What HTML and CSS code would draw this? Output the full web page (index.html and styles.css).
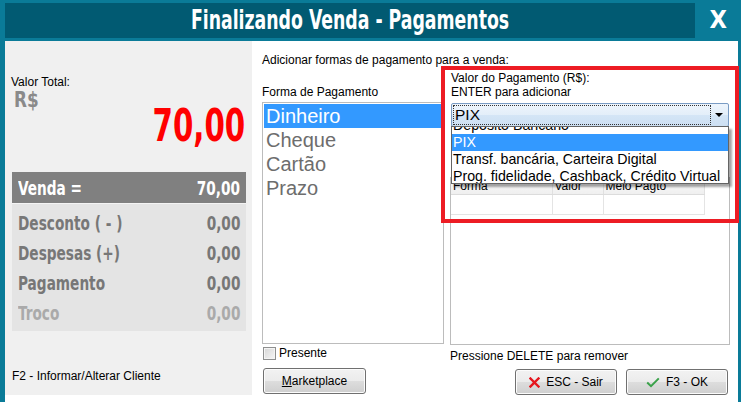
FILE: index.html
```html
<!DOCTYPE html>
<html lang="pt-BR">
<head>
<meta charset="utf-8">
<title>Finalizando Venda - Pagamentos</title>
<link rel="stylesheet" href="styles.css">
</head>
<body>
<div class="window">
  <header class="titlebar">
    <h1 class="title"><span class="nx nx-c">Finalizando Venda - Pagamentos</span></h1>
    <div class="close"><span class="nx nx-c">X</span></div>
  </header>
  <main class="body">
    <aside class="left">
      <div class="lbl-total">Valor Total:</div>
      <div class="currency"><span class="nx">R$</span></div>
      <div class="big-total"><span class="nx nx-r">70,00</span></div>
      <div class="summary">
        <div class="sum-head"><span class="nx">Venda =</span><span class="nx nx-r">70,00</span></div>
        <div class="sum-rows">
          <div class="sum-row"><span class="nx">Desconto ( - )</span><span class="nx nx-r">0,00</span></div>
          <div class="sum-row"><span class="nx">Despesas (+)</span><span class="nx nx-r">0,00</span></div>
          <div class="sum-row"><span class="nx">Pagamento</span><span class="nx nx-r">0,00</span></div>
          <div class="sum-row muted"><span class="nx">Troco</span><span class="nx nx-r">0,00</span></div>
        </div>
      </div>
      <div class="f2">F2 - Informar/Alterar Cliente</div>
    </aside>
    <section class="right">
      <p class="intro">Adicionar formas de pagamento para a venda:</p>
      <div class="cols">
        <div class="col1">
          <div class="label">Forma de Pagamento</div>
          <ul class="listbox">
            <li class="sel">Dinheiro</li>
            <li>Cheque</li>
            <li>Cartão</li>
            <li>Prazo</li>
          </ul>
          <label class="check"><span class="box"></span>Presente</label>
          <div class="btnrow">
            <button class="btn btn-mk"><u>M</u>arketplace</button>
          </div>
        </div>
        <div class="col2">
          <div class="label ind">Valor do Pagamento (R$):</div>
          <div class="label ind">ENTER para adicionar</div>
          <div class="combo">
            <span class="combo-focus">PIX</span>
            <span class="arrow"></span>
            <ul class="dropdown">
              <li>Depósito Bancário</li>
              <li class="sel">PIX</li>
              <li>Transf. bancária, Carteira Digital</li>
              <li>Prog. fidelidade, Cashback, Crédito Virtual</li>
            </ul>
          </div>
          <div class="grid">
            <table>
              <thead>
                <tr><th class="c1">Forma</th><th class="c2">Valor</th><th class="c3">Meio Pagto</th></tr>
              </thead>
              <tbody>
                <tr><td></td><td></td><td></td></tr>
              </tbody>
            </table>
          </div>
          <div class="hint">Pressione DELETE para remover</div>
          <div class="btnrow end">
            <button class="btn btn-act">
              <svg width="11" height="11" viewBox="0 0 11 11"><path d="M1.5 1.5 L9.5 9.5 M9.5 1.5 L1.5 9.5" stroke="#e5161d" stroke-width="2.4" stroke-linecap="square"/></svg>
              <span>ESC - Sair</span>
            </button>
            <button class="btn btn-act">
              <svg width="14" height="11" viewBox="0 0 14 11"><path d="M1.2 5.6 L5 9.2 L12.8 1.4" fill="none" stroke="#3aa24a" stroke-width="2"/></svg>
              <span>F3 - OK</span>
            </button>
          </div>
        </div>
      </div>
    </section>
  </main>
  <div class="highlight"></div>
</div>
</body>
</html>
```
FILE: styles.css
```css
* { box-sizing: border-box; }
html, body { margin: 0; padding: 0; }
body {
  background: #fff;
  font-family: "Liberation Sans", Arial, sans-serif;
  font-size: 12px;
  color: #000;
}
.nx {
  display: inline-block;
  transform: scaleX(0.76);
  transform-origin: left center;
  white-space: nowrap;
}
.nx-r { transform-origin: right center; }
.nx-c { transform-origin: center center; }
.window {
  position: relative;
  width: 741px;
  height: 402px;
  display: flex;
  flex-direction: column;
  overflow: hidden;
  background: #0a7b98;
}
.titlebar { display: flex; height: 41px; flex: none; }
.title {
  flex: 1;
  margin: 3px 0 3px 5px;
  background: #015a72;
  color: #fff;
  font: bold 26px/35px "DejaVu Sans Condensed", "DejaVu Sans", sans-serif;
  text-align: center;
}
.title .nx { transform: scaleX(0.74); }
.close {
  width: 46px;
  color: #fff;
  font: bold 24px/41px "DejaVu Sans Condensed", "DejaVu Sans", sans-serif;
  text-align: center;
}
.close .nx { transform: scaleX(1.05); }
.body {
  flex: 1;
  display: flex;
  align-items: flex-start;
  margin: 0 3px 0 5px;
  background: #fff;
}
.left {
  width: 247px;
  height: 354px;
  flex: none;
  background: #f0f0f0;
  padding: 34px 6px 0 7px;
}
.lbl-total { line-height: 14px; margin-left: -1px; }
.currency {
  font: bold 22px/22px "DejaVu Sans Condensed", "DejaVu Sans", sans-serif;
  color: #8a8a8a;
  margin-left: 2px;
}
.currency .nx { transform: scaleX(0.85); }
.big-total {
  font: bold 44px/44px "DejaVu Sans Condensed", "DejaVu Sans", sans-serif;
  color: #ff0000;
  text-align: right;
  margin-top: -7px;
  margin-right: 1px;
}
.big-total .nx { transform: scaleX(0.74); }
.summary {
  margin-top: 24px;
  background: #e4e4e4;
  padding-bottom: 3px;
  font-family: "DejaVu Sans Condensed", "DejaVu Sans", sans-serif;
  font-weight: bold;
  font-size: 20px;
}
.sum-head {
  display: flex;
  justify-content: space-between;
  align-items: center;
  height: 32px;
  padding: 0 6px;
  background: #808080;
  color: #fff;
  border-bottom: 1px solid #f4f4f4;
}
.sum-rows { padding-top: 4px; }
.sum-row {
  display: flex;
  justify-content: space-between;
  align-items: center;
  height: 30px;
  padding: 0 6px;
  color: #777;
}
.sum-row.muted { color: #aaa; }
.f2 { margin-top: 38px; line-height: 14px; }

.right {
  flex: 1;
  padding: 12px 0 0 10px;
}
.intro { margin: 0; line-height: 14px; }
.cols { display: flex; gap: 6px; margin-top: 4px; }
.col1 { width: 182px; padding-top: 14px; display: flex; flex-direction: column; }
.col2 { width: 280px; display: flex; flex-direction: column; }
.label { line-height: 14px; }
.label.ind { padding-left: 1px; }
.listbox {
  list-style: none;
  margin: 3px 0 0;
  padding: 1px;
  height: 242px;
  border: 1px solid #bcbcbc;
  background: #fff;
  font-size: 20px;
  color: #6d6d6d;
}
.listbox li { height: 24px; line-height: 24px; padding-left: 2px; }
.listbox li.sel { background: #3399ff; color: #fff; }
.check {
  display: flex;
  align-items: center;
  gap: 3px;
  margin-top: 2px;
  height: 14px;
  padding-left: 1px;
}
.box {
  width: 13px;
  height: 13px;
  border: 1px solid #8e8f8f;
  background: linear-gradient(135deg, #d6d6d6, #f6f6f6);
  box-shadow: inset 0 0 0 1px #f4f4f4;
}
.btnrow { display: flex; margin-top: 8px; padding-left: 1px; }
.btnrow.end { justify-content: flex-end; gap: 9px; margin-top: 6px; padding: 0 2px 0 0; }
.btn {
  height: 26px;
  border: 1px solid #707070;
  border-radius: 3px;
  background: linear-gradient(#f2f2f2 0%, #ebebeb 50%, #dddddd 51%, #cfcfcf 100%);
  box-shadow: inset 0 0 0 1px #fcfcfc;
  font: 12px "Liberation Sans", Arial, sans-serif;
  color: #000;
  padding: 0;
}
.btn-mk { width: 103px; }
.btn-act {
  width: 102px;
  display: flex;
  align-items: center;
  justify-content: center;
  gap: 6px;
}
.combo {
  position: relative;
  margin: 4px 0 0 1px;
  width: 278px;
  height: 24px;
  border: 1px solid #7a9cc4;
  border-radius: 2px;
  background: linear-gradient(#eef5fc 0%, #e3eef9 50%, #d4e5f6 51%, #cde0f3 100%);
  padding: 1px;
}
.combo-focus {
  display: block;
  width: 258px;
  height: 20px;
  border: 1px dotted #333;
  font-size: 15.5px;
  line-height: 18px;
  padding-left: 1px;
}
.arrow {
  position: absolute;
  right: 5px;
  top: 9px;
  width: 0;
  height: 0;
  border-left: 4px solid transparent;
  border-right: 4px solid transparent;
  border-top: 4px solid #000;
}
.dropdown {
  position: absolute;
  left: -1px;
  top: 22px;
  width: 278px;
  height: 58px;
  margin: 0;
  padding: 0;
  list-style: none;
  background: #fff;
  border: 1px solid #646464;
  box-shadow: 3px 3px 2px rgba(0, 0, 0, 0.35);
  overflow: hidden;
  z-index: 2;
  font-size: 14.2px;
}
.dropdown li { height: 17px; line-height: 17px; padding-left: 1px; white-space: nowrap; }
.dropdown li:first-child { margin-top: -10px; }
.dropdown li.sel { background: #3399ff; color: #fff; }
.grid {
  margin-top: 50px;
  height: 168px;
  border: 1px solid #bcbcbc;
  background: #fff;
}
.grid table { border-collapse: collapse; }
.grid th {
  height: 16px;
  font-weight: normal;
  text-align: left;
  padding: 0 2px;
  background: linear-gradient(#fbfbfb, #efefef);
  border-right: 1px solid #e0e0e0;
  border-bottom: 1px solid #dcdcdc;
  line-height: 14px;
}
.grid td {
  height: 20px;
  border-right: 1px solid #e4e4e4;
  border-bottom: 1px solid #e4e4e4;
}
.c1 { width: 101px; }
.c2 { width: 51px; }
.c3 { width: 101px; }
.hint { margin-top: 4px; line-height: 14px; }
.highlight {
  position: absolute;
  left: 441px;
  top: 66px;
  width: 298px;
  height: 157px;
  border: 4px solid #ed1c24;
  z-index: 5;
}
```
